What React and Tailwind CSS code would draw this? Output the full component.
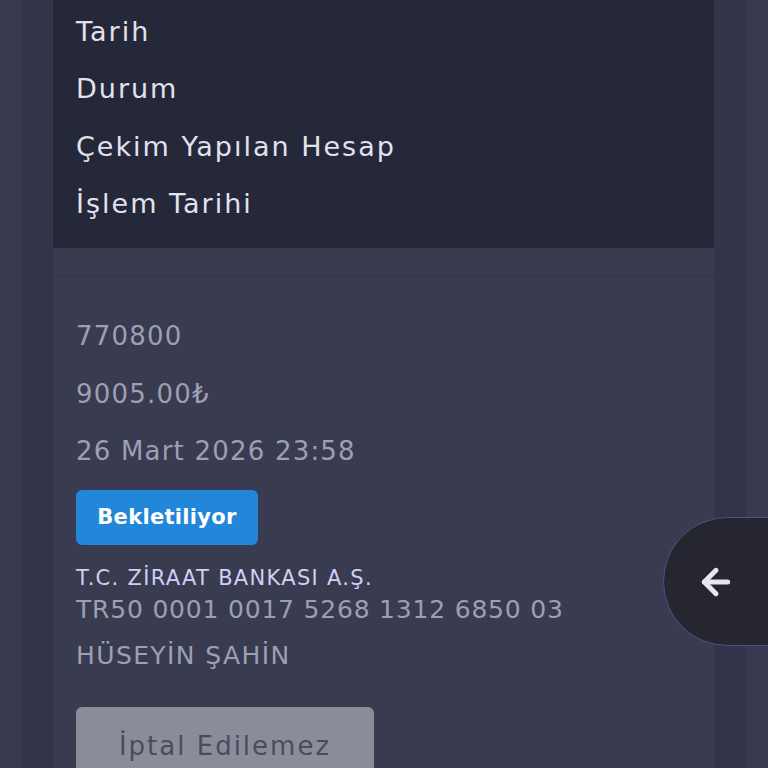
import { ArrowLeft } from 'lucide-react';

const labels = ['Tarih', 'Durum', 'Çekim Yapılan Hesap', 'İşlem Tarihi'];

export default function App() {
  return (
    <div
      className="relative h-[768px] w-[768px] overflow-hidden bg-[#383a4f] flex"
      style={{ fontFamily: '"DejaVu Sans", "Noto Sans", sans-serif' }}
    >
      <div className="w-[22px] shrink-0" />
      <div className="w-[31px] shrink-0 bg-[#32344a]" />

      <main className="w-[661px] shrink-0 flex flex-col">
        <section className="h-[248px] shrink-0 bg-[#252839] pl-[23px] flex flex-col pt-[3px]">
          {labels.map((l) => (
            <div key={l} className="h-[57.6px] shrink-0 flex items-center text-[27px] tracking-[2px] text-[#e2e2ee]">
              {l}
            </div>
          ))}
        </section>
        <div className="h-[29px] shrink-0 bg-[#393c51] border-b border-[#30324a]" />

        <section className="flex-1 bg-[#393b50] pl-[23px] pt-[31px] text-[#9d9fb3] tracking-[1.2px]">
          <div className="h-[57.6px] flex items-center text-[26px]">770800</div>
          <div className="h-[57.6px] flex items-center text-[26px]">9005.00₺</div>
          <div className="h-[57.6px] flex items-center text-[26px]">26 Mart 2026 23:58</div>
          <div className="mt-[9px] inline-flex h-[55px] w-[182px] items-center justify-center rounded-[6px] bg-[#2287d8] text-[21px] font-semibold tracking-[0.3px] text-white">
            Bekletiliyor
          </div>
          <div className="mt-[20px] text-[21px] leading-[26px] tracking-[1.3px] text-[#cfd0f3]">T.C. ZİRAAT BANKASI A.Ş.</div>
          <div className="mt-[2px] text-[25px] leading-[34px] tracking-[0.8px]">TR50 0001 0017 5268 1312 6850 03</div>
          <div className="mt-[12px] text-[25px] leading-[34px] tracking-[1.4px]">HÜSEYİN ŞAHİN</div>
          <div className="mt-[34px] flex h-[80px] w-[298px] items-start justify-center rounded-[6px] bg-[#8a8c9a] pt-[20px] text-[26px] tracking-[2px] text-[#4a4c5e]">
            İptal Edilemez
          </div>
        </section>
      </main>

      <div className="w-[32px] shrink-0 bg-[#32344a]" />
      <div className="w-[22px] shrink-0" />

      <button className="absolute left-[663px] top-[517px] h-[129px] w-[120px] rounded-l-full border border-[#4d508a] bg-[#25262f] flex items-center pl-[32px] text-[#e6e6f2]">
        <ArrowLeft size={40} strokeWidth={3} />
      </button>
    </div>
  );
}
